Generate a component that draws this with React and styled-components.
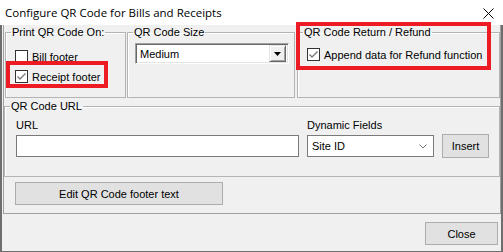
import React from "react"
import styled, { createGlobalStyle } from "styled-components"

const GlobalStyle = createGlobalStyle`
    html, body {
        margin: 0;
        padding: 0;
        background: #ffffff;
    }
    * {
        box-sizing: border-box;
    }
`

const Window = styled.div`
    position: relative;
    width: 503px;
    height: 252px;
    display: flex;
    flex-direction: column;
    overflow: hidden;
    font-family: "Liberation Sans", Arial, sans-serif;
    font-size: 11px;
    color: #000;
`

const TitleBar = styled.div`
    height: 25px;
    flex: none;
    display: flex;
    align-items: center;
    justify-content: space-between;
    padding: 0 9px 0 5px;
    background: #ffffff;
`

const TitleText = styled.div`
    font-family: "Open Sans", "Noto Sans", sans-serif;
    font-size: 11.5px;
    color: #000;
    padding-bottom: 1px;
`

const CloseX = styled.svg`
    width: 11px;
    height: 11px;
    margin-top: 1px;
`

const Body = styled.div`
    flex: 1;
    display: flex;
    flex-direction: column;
    background: #f0f0f0;
    border-left: 2px solid #6e6e6e;
    border-right: 2px solid #6e6e6e;
    border-bottom: 1px solid #6e6e6e;
`

const Panel = styled.div`
    margin-left: 1px;
    height: 189px;
    flex: none;
    display: flex;
    flex-direction: column;
    padding-top: 1px;
    border: 1px solid #a0a0a0;
    border-top: none;
`

const TopRow = styled.div`
    display: flex;
    gap: 1px;
    padding-left: 1px;
`

const GroupBox = styled.fieldset`
    margin: 0;
    padding: 0;
    min-width: 0;
    width: ${p => p.$w}px;
    height: ${p => p.$h}px;
    margin-left: ${p => p.$ml || 0}px;
    margin-top: ${p => p.$mt || 0}px;
    border: 1px solid #b4b4b4;
    box-shadow: inset 1px 1px 0 #ffffff;
`

const Legend = styled.legend`
    margin-left: 5px;
    padding: 0 1px;
    font-size: 11px;
    line-height: 13px;
`

const GroupContent = styled.div`
    padding: ${p => p.$pad};
`

const CheckList = styled.div`
    display: flex;
    flex-direction: column;
    gap: 7px;
`

const CheckRow = styled.label`
    display: flex;
    align-items: center;
    gap: 4px;
    height: 13px;
    white-space: nowrap;
`

const Box = styled.span`
    width: 13px;
    height: 13px;
    flex: none;
    background: #ffffff;
    border: 1px solid #333333;
    display: flex;
    align-items: center;
    justify-content: center;
`

const ClassicCombo = styled.div`
    width: 154px;
    height: 21px;
    display: flex;
    align-items: center;
    justify-content: space-between;
    padding: 0 2px 0 4px;
    background: #ffffff;
    border-top: 1px solid #a0a0a0;
    border-left: 1px solid #a0a0a0;
    border-right: 1px solid #ffffff;
    border-bottom: 1px solid #ffffff;
    box-shadow: inset 1px 1px 0 #696969, inset -1px -1px 0 #e3e3e3;
    font-size: 11px;
`

const ComboButton = styled.span`
    width: 17px;
    height: 17px;
    display: flex;
    align-items: center;
    justify-content: center;
    background: #f0f0f0;
    border-top: 1px solid #e3e3e3;
    border-left: 1px solid #e3e3e3;
    border-right: 1px solid #696969;
    border-bottom: 1px solid #696969;
    box-shadow: inset 1px 1px 0 #ffffff, inset -1px -1px 0 #a0a0a0;
`

const UrlGrid = styled.div`
    display: grid;
    grid-template-columns: 283px 127px 47px;
    grid-template-rows: 13px 22px;
    column-gap: 8px;
    row-gap: 3px;
    align-items: center;
`

const FieldLabel = styled.div`
    line-height: 13px;
`

const TextInput = styled.div`
    height: 22px;
    background: #ffffff;
    border: 1px solid #7a7a7a;
`

const Select = styled.div`
    height: 22px;
    display: flex;
    align-items: center;
    justify-content: space-between;
    padding: 0 6px 0 4px;
    background: #ffffff;
    border: 1px solid #7a7a7a;
`

const Button = styled.div`
    width: ${p => p.$w}px;
    height: ${p => p.$h || 23}px;
    margin: ${p => p.$m || "0"};
    display: flex;
    align-items: center;
    justify-content: center;
    background: #e1e1e1;
    border: 1px solid #adadad;
    font-size: 11px;
`

const Footer = styled.div`
    flex: 1;
    display: flex;
    justify-content: flex-end;
    padding: 8px 3px 0 0;
`

const Annotation = styled.div`
    position: absolute;
    left: ${p => p.$x}px;
    top: ${p => p.$y}px;
    width: ${p => p.$w}px;
    height: ${p => p.$h}px;
    border: 4px solid #ed1c24;
    pointer-events: none;
`

function CheckBox({ checked }) {
    return (
        <Box>
            {checked && (
                <svg width="11" height="11" viewBox="0 0 11 11">
                    <polyline points="1.5,5.5 4,8 9.5,2.5" fill="none" stroke="#7a7a7a" strokeWidth="1.4" />
                </svg>
            )}
        </Box>
    )
}

function Check({ checked, children }) {
    return (
        <CheckRow>
            <CheckBox checked={checked} />
            <span>{children}</span>
        </CheckRow>
    )
}

export default function App() {
    return (
        <Window>
            <GlobalStyle />
            <TitleBar>
                <TitleText>Configure QR Code for Bills and Receipts</TitleText>
                <CloseX viewBox="0 0 11 11">
                    <line x1="0.5" y1="0.5" x2="10.5" y2="10.5" stroke="#000" strokeWidth="1" />
                    <line x1="10.5" y1="0.5" x2="0.5" y2="10.5" stroke="#000" strokeWidth="1" />
                </CloseX>
            </TitleBar>
            <Body>
                <Panel>
                    <TopRow>
                        <GroupBox $w={121} $h={72}>
                            <Legend>Print QR Code On:</Legend>
                            <GroupContent $pad="11px 0 0 9px">
                                <CheckList>
                                    <Check>Bill footer</Check>
                                    <Check checked>Receipt footer</Check>
                                </CheckList>
                            </GroupContent>
                        </GroupBox>
                        <GroupBox $w={168} $h={72}>
                            <Legend>QR Code Size</Legend>
                            <GroupContent $pad="4px 0 0 7px">
                                <ClassicCombo>
                                    <span>Medium</span>
                                    <ComboButton>
                                        <svg width="7" height="4" viewBox="0 0 7 4">
                                            <polygon points="0,0 7,0 3.5,4" fill="#000" />
                                        </svg>
                                    </ComboButton>
                                </ClassicCombo>
                            </GroupContent>
                        </GroupBox>
                        <GroupBox $w={203} $h={72} $ml={1}>
                            <Legend>QR Code Return / Refund</Legend>
                            <GroupContent $pad="9px 0 0 9px">
                                <Check checked>Append data for Refund function</Check>
                            </GroupContent>
                        </GroupBox>
                    </TopRow>
                    <GroupBox $w={496} $h={77} $mt={2}>
                        <Legend>QR Code URL</Legend>
                        <GroupContent $pad="6px 0 0 11px">
                            <UrlGrid>
                                <FieldLabel>URL</FieldLabel>
                                <FieldLabel>Dynamic Fields</FieldLabel>
                                <span />
                                <TextInput />
                                <Select>
                                    <span>Site ID</span>
                                    <svg width="8" height="5" viewBox="0 0 8 5">
                                        <polyline points="0.5,0.5 4,4 7.5,0.5" fill="none" stroke="#777" strokeWidth="1" />
                                    </svg>
                                </Select>
                                <Button $w={47} $h={24}>Insert</Button>
                            </UrlGrid>
                        </GroupContent>
                    </GroupBox>
                    <Button $w={208} $m="5px 0 0 11px">Edit QR Code footer text</Button>
                </Panel>
                <Footer>
                    <Button $w={73}>Close</Button>
                </Footer>
            </Body>
            <Annotation $x={6} $y={61} $w={102} $h={27} />
            <Annotation $x={296} $y={22} $w={195} $h={48} />
        </Window>
    )
}
